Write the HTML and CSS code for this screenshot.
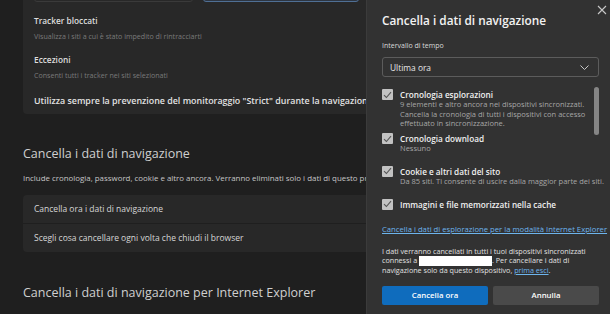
FILE: index.html
```html
<!DOCTYPE html>
<html lang="it">
<head>
  <meta charset="UTF-8">
  <title>Impostazioni - Privacy</title>
  <link rel="stylesheet" href="styles.css">
</head>
<body>
  <div class="page">
    <div class="card tracker">
      <div class="card-top">
        <div class="select-stub"></div>
        <div class="blue-stub"></div>
      </div>
      <div class="item">
        <div class="item-title">Tracker bloccati</div>
        <div class="item-sub">Visualizza i siti a cui è stato impedito di rintracciarti</div>
      </div>
      <div class="item">
        <div class="item-title">Eccezioni</div>
        <div class="item-sub">Consenti tutti i tracker nei siti selezionati</div>
      </div>
      <div class="strict">Utilizza sempre la prevenzione del monitoraggio "Strict" durante la navigazione InPrivate</div>
    </div>

    <h2 class="section-title first">Cancella i dati di navigazione</h2>
    <p class="section-desc">Include cronologia, password, cookie e altro ancora. Verranno eliminati solo i dati di questo profilo.</p>
    <div class="card rows">
      <div class="row">Cancella ora i dati di navigazione</div>
      <div class="row">Scegli cosa cancellare ogni volta che chiudi il browser</div>
    </div>

    <h2 class="section-title">Cancella i dati di navigazione per Internet Explorer</h2>
  </div>

  <div class="panel">
    <div class="panel-head">
      <h1>Cancella i dati di navigazione</h1>
      <svg class="close" width="10" height="10" viewBox="0 0 10 10">
        <path d="M1 1 L9 9 M9 1 L1 9" stroke="#c8c8c8" stroke-width="1.1" fill="none"/>
      </svg>
    </div>

    <div class="label">Intervallo di tempo</div>
    <div class="select">
      <span>Ultima ora</span>
      <svg width="9" height="5" viewBox="0 0 9 5">
        <path d="M0.5 0.5 L4.5 4.5 L8.5 0.5" stroke="#c8c8c8" stroke-width="1" fill="none"/>
      </svg>
    </div>

    <div class="options">
      <div class="scrollbar"></div>
      <div class="option tight">
        <span class="check"><svg width="9" height="8" viewBox="0 0 9 8"><path d="M1 4.2 L3.4 6.5 L8 1.2" stroke="#555" stroke-width="1.1" fill="none"/></svg></span>
        <div>
          <div class="opt-title">Cronologia esplorazioni</div>
          <div class="opt-sub">9 elementi e altro ancora nei dispositivi sincronizzati. Cancella la cronologia di tutti i dispositivi con accesso effettuato in sincronizzazione.</div>
        </div>
      </div>
      <div class="option">
        <span class="check"><svg width="9" height="8" viewBox="0 0 9 8"><path d="M1 4.2 L3.4 6.5 L8 1.2" stroke="#555" stroke-width="1.1" fill="none"/></svg></span>
        <div>
          <div class="opt-title">Cronologia download</div>
          <div class="opt-sub">Nessuno</div>
        </div>
      </div>
      <div class="option">
        <span class="check"><svg width="9" height="8" viewBox="0 0 9 8"><path d="M1 4.2 L3.4 6.5 L8 1.2" stroke="#555" stroke-width="1.1" fill="none"/></svg></span>
        <div>
          <div class="opt-title">Cookie e altri dati del sito</div>
          <div class="opt-sub single">Da 85 siti. Ti consente di uscire dalla maggior parte dei siti.</div>
        </div>
      </div>
      <div class="option">
        <span class="check"><svg width="9" height="8" viewBox="0 0 9 8"><path d="M1 4.2 L3.4 6.5 L8 1.2" stroke="#555" stroke-width="1.1" fill="none"/></svg></span>
        <div>
          <div class="opt-title">Immagini e file memorizzati nella cache</div>
        </div>
      </div>
    </div>

    <a class="ie-link">Cancella i dati di esplorazione per la modalità Internet Explorer</a>

    <p class="note">I dati verranno cancellati in tutti i tuoi dispositivi sincronizzati connessi a <span class="redact"></span>. Per cancellare i dati di navigazione solo da questo dispositivo, <a>prima esci</a>.</p>

    <div class="buttons">
      <button class="primary">Cancella ora</button>
      <button>Annulla</button>
    </div>
  </div>
</body>
</html>
```

FILE: styles.css
```css
body {
  margin: 0;
  width: 610px;
  height: 314px;
  overflow: hidden;
  background: #1f1f1f;
  font-family: "Open Sans", "Noto Sans", sans-serif;
  color: #d6d6d6;
  position: relative;
}
.page {
  padding-left: 23px;
  width: 600px;
}
.card {
  background: #282828;
  border-radius: 4px;
}
.tracker {
  margin-top: -26px;
  padding: 0 11px 7px 11px;
}
.card-top {
  display: flex;
  gap: 10px;
  height: 28px;
}
.select-stub {
  width: 157px;
  border: 1px solid #3a3a3a;
  border-radius: 3px;
}
.blue-stub {
  width: 154px;
  border: 1px solid #4f6f94;
  border-radius: 3px;
  background: #2d3541;
}
.item {
  padding-top: 13px;
}
.item:first-of-type {
  padding-top: 9px;
}
.item-title {
  font-size: 8.3px;
  font-weight: 600;
  color: #dedede;
  line-height: 12px;
}
.item-sub {
  font-size: 7.1px;
  color: #7a7a7a;
  line-height: 10px;
  margin-top: 4px;
}
.strict {
  font-size: 8.9px;
  font-weight: 600;
  color: #e2e2e2;
  white-space: nowrap;
  padding-top: 15px;
  line-height: 12px;
}
.section-title {
  font-size: 12.5px;
  font-weight: normal;
  color: #cfcfcf;
  margin: 0;
  line-height: 16px;
}
.section-title.first {
  margin-top: 32px;
}
.section-desc {
  font-size: 7.9px;
  color: #c6c6c6;
  margin: 11px 0 0 0;
  white-space: nowrap;
  line-height: 11px;
}
.rows {
  margin-top: 11px;
  margin-bottom: 33px;
}
.row {
  font-size: 8.5px;
  color: #d6d6d6;
  padding: 0 11px;
  height: 28px;
  line-height: 28px;
}
.row + .row {
  border-top: 1px solid #1f1f1f;
}

.panel {
  position: absolute;
  top: 0;
  left: 366px;
  width: 244px;
  height: 314px;
  box-sizing: border-box;
  background: #323232;
  border-left: 1px solid #3b3b3b;
  padding: 0 11px 0 15px;
}
.panel-head {
  display: flex;
  justify-content: space-between;
  padding-top: 12px;
}
.panel-head h1 {
  margin: 0;
  font-size: 11.8px;
  font-weight: 600;
  color: #f2f2f2;
  line-height: 16px;
}
.close {
  margin-top: -7px;
  margin-right: -8px;
}
.label {
  font-size: 7px;
  color: #dadada;
  margin-top: 13px;
  line-height: 10px;
}
.select {
  margin-top: 6px;
  height: 20px;
  box-sizing: border-box;
  border: 1px solid #5c5c5c;
  border-radius: 3px;
  display: flex;
  justify-content: space-between;
  align-items: center;
  padding: 0 9px 0 7px;
  font-size: 8.4px;
  color: #e8e8e8;
}
.options {
  position: relative;
  margin-top: 12px;
}
.scrollbar {
  position: absolute;
  right: 0;
  top: -2px;
  width: 5px;
  height: 48px;
  background: #858585;
  border-radius: 3px;
}
.option {
  display: flex;
  gap: 7px;
  padding-right: 4px;
  margin-bottom: 12px;
}
.option.tight {
  margin-bottom: 4px;
}
.check {
  flex: none;
  width: 11px;
  height: 11px;
  background: #c2c2c2;
  border-radius: 1px;
  display: flex;
  align-items: center;
  justify-content: center;
}
.opt-title {
  font-size: 8.2px;
  font-weight: 600;
  color: #f0f0f0;
  line-height: 11px;
}
.opt-sub {
  font-size: 7.5px;
  color: #a6a6a6;
  line-height: 9.7px;
}
.opt-sub.single {
  white-space: nowrap;
}
.ie-link {
  display: block;
  font-size: 7.7px;
  color: #6db4ec;
  text-decoration: underline;
  white-space: nowrap;
  line-height: 10px;
  margin-top: 14px;
}
.note {
  font-size: 7.2px;
  color: #e0e0e0;
  line-height: 9.7px;
  margin: 13px 0 0 0;
}
.note a {
  color: #6db4ec;
  text-decoration: underline;
}
.redact {
  display: inline-block;
  width: 73px;
  height: 10px;
  background: #ffffff;
  vertical-align: top;
}
.buttons {
  display: flex;
  gap: 5px;
  margin-top: 10px;
}
.buttons button {
  flex: 1;
  height: 19px;
  border: none;
  border-radius: 2px;
  background: #4a4a4a;
  color: #ffffff;
  font-family: "Open Sans", "Noto Sans", sans-serif;
  font-size: 7.8px;
  font-weight: 600;
}
.buttons button.primary {
  background: #0f6cbd;
}
```
